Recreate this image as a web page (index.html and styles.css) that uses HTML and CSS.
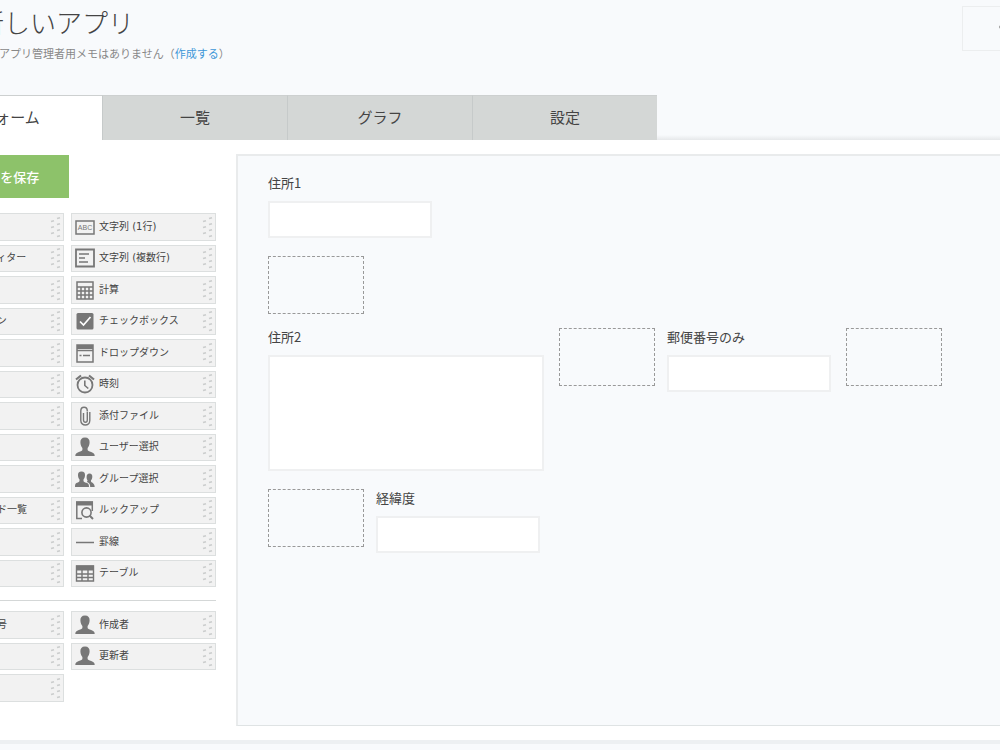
FILE: index.html
```
<!DOCTYPE html>
<html lang="ja">
<head>
  <meta charset="utf-8">
  <title>新しいアプリ</title>
  <link rel="stylesheet" href="styles.css">
</head>
<body>
  <svg class="sprite" aria-hidden="true">
    <symbol id="grip" viewBox="0 0 12 22">
      <path d="M2 5.500l3-.8M2 11.500l3-.8M2 17.500l3-.8M8 2.500l3-.8M8 8.500l3-.8M8 14.500l3-.8M8 20.500l3-.8" stroke="#cbcdcd" stroke-width="1.600" fill="none"/>
    </symbol>
    <symbol id="user" viewBox="0 0 20 20">
      <path d="M10 .5c3.300 0 4.800 2 4.600 5-.1 2.600-1 4.400-2 5.600v1.600c0 1.300 1.500 1.500 3.600 2.200 2.300.8 3.500 1.600 3.500 4.100H.3c0-2.500 1.200-3.300 3.500-4.100 2.100-.7 3.600-.9 3.600-2.200v-1.600c-1-1.200-1.900-3-2-5.600C5.200 2.500 6.700.5 10 .5z"/>
    </symbol>
  </svg>

  <header class="app-header">
    <div>
      <h1 class="app-title">新しいアプリ</h1>
      <p class="app-memo">アプリ管理者用メモはありません（<a href="#">作成する</a>）</p>
    </div>
    <button class="header-button" aria-label="設定">
      <svg viewBox="0 0 20 20" width="16" height="16"><circle cx="10" cy="10" r="6" fill="none" stroke="#aaa" stroke-width="3"/><path d="M0 10h4M16 10h4M10 0v4M10 16v4" stroke="#aaa" stroke-width="3"/></svg>
    </button>
  </header>

  <nav class="tabs">
    <a class="tab active" href="#">フォーム</a>
    <a class="tab" href="#">一覧</a>
    <a class="tab" href="#">グラフ</a>
    <a class="tab" href="#">設定</a>
  </nav>

  <main class="editor">
    <aside class="sidebar">
      <button class="save-button">フォームを保存</button>

      <ul class="palette">
        <li class="item"><span class="icon"></span>ラベル<svg class="grip"><use href="#grip"/></svg></li>
        <li class="item">
          <svg class="icon" viewBox="0 0 20 20"><path d="M1 4h18v13H1z" fill="none" stroke="#777" stroke-width="1.500"/><text class="icon-text" x="10" y="13" text-anchor="middle">ABC</text></svg>
          文字列 (1行)<svg class="grip"><use href="#grip"/></svg>
        </li>
        <li class="item"><span class="icon"></span>リッチエディター<svg class="grip"><use href="#grip"/></svg></li>
        <li class="item">
          <svg class="icon" viewBox="0 0 20 20"><path d="M1 1.500h18v17H1z" fill="none" stroke="#777" stroke-width="1.800"/><path d="M4 6h10M4 10h6M4 14h9" stroke="#777" stroke-width="1.500"/></svg>
          文字列 (複数行)<svg class="grip"><use href="#grip"/></svg>
        </li>
        <li class="item"><span class="icon"></span>数値<svg class="grip"><use href="#grip"/></svg></li>
        <li class="item">
          <svg class="icon" viewBox="0 0 20 20"><path d="M2 2h16v17H2zM2 7h16M2 11h16M2 15h16M6 7v12M10 7v12M14 7v12" fill="none" stroke="#777" stroke-width="1.500"/></svg>
          計算<svg class="grip"><use href="#grip"/></svg>
        </li>
        <li class="item"><span class="icon"></span>ラジオボタン<svg class="grip"><use href="#grip"/></svg></li>
        <li class="item">
          <svg class="icon" viewBox="0 0 20 20"><rect x="1.500" y="2" width="17" height="16.500" rx="1.500"/><path d="M5 10.500l3.500 3.500 7-8" fill="none" stroke="#fff" stroke-width="1.700"/></svg>
          チェックボックス<svg class="grip"><use href="#grip"/></svg>
        </li>
        <li class="item"><span class="icon"></span>複数選択<svg class="grip"><use href="#grip"/></svg></li>
        <li class="item">
          <svg class="icon" viewBox="0 0 20 20"><path d="M2 2h16v17H2z" fill="none" stroke="#777" stroke-width="1.500"/><path d="M2 2h16v4H2z"/><path d="M2 7.500h16M4.500 12.500h2M8 12.500h7" stroke="#777" stroke-width="1.500"/></svg>
          ドロップダウン<svg class="grip"><use href="#grip"/></svg>
        </li>
        <li class="item"><span class="icon"></span>日付<svg class="grip"><use href="#grip"/></svg></li>
        <li class="item">
          <svg class="icon" viewBox="0 0 20 20"><circle cx="10" cy="11" r="7.500" fill="none" stroke="#777" stroke-width="1.800"/><path d="M9.800 6.500v5l3.500 3" fill="none" stroke="#777" stroke-width="1.600"/><path d="M1 5.500l5-4M19 5.500l-5-4" stroke="#777" stroke-width="2.200"/></svg>
          時刻<svg class="grip"><use href="#grip"/></svg>
        </li>
        <li class="item"><span class="icon"></span>日時<svg class="grip"><use href="#grip"/></svg></li>
        <li class="item">
          <svg class="icon" viewBox="0 0 20 20"><path d="M12.300 5.500v8.500c0 3-3.800 3-3.800 0V7M14.800 6v8.500c0 6-9 6-9 0V5c0-5 6.500-5 6.500 0" fill="none" stroke="#777" stroke-width="1.400"/></svg>
          添付ファイル<svg class="grip"><use href="#grip"/></svg>
        </li>
        <li class="item"><span class="icon"></span>リンク<svg class="grip"><use href="#grip"/></svg></li>
        <li class="item"><svg class="icon"><use href="#user"/></svg>ユーザー選択<svg class="grip"><use href="#grip"/></svg></li>
        <li class="item"><span class="icon"></span>組織選択<svg class="grip"><use href="#grip"/></svg></li>
        <li class="item">
          <svg class="icon" viewBox="0 0 20 20"><path d="M6.500 2.500c2.500 0 3.700 1.500 3.500 4-.1 2-.8 3.200-1.500 4v1.500c0 1 1.300 1.200 2.800 1.800 2 .7 2.700 1.500 2.700 4.200H0c0-2.700.5-3.500 2-4.200 1.300-.6 2.500-.8 2.500-1.800v-1.500c-.7-.8-1.400-2-1.500-4-.2-2.500 1-4 3.500-4z"/><path d="M14.500 4.500c2 0 3 1.500 2.800 3.500-.1 1.500-.6 2.600-1.300 3.300v1.200c0 1 3.700 1.200 3.700 5.500h-4.500c0-3-1-4-3.200-5l.6-1.700c-.7-.8-1-1.800-1-3.300 0-2 1-3.500 2.900-3.500z"/></svg>
          グループ選択<svg class="grip"><use href="#grip"/></svg>
        </li>
        <li class="item"><span class="icon"></span>関連レコード一覧<svg class="grip"><use href="#grip"/></svg></li>
        <li class="item">
          <svg class="icon" viewBox="0 0 20 20"><path d="M1 1.500h17v4H1z"/><path d="M7 18.500H1.800V2h15.500v9" fill="none" stroke="#777" stroke-width="1.500"/><circle cx="11.500" cy="12.500" r="4.600" fill="none" stroke="#777" stroke-width="1.600"/><path d="M14.500 15.500l3.500 3.500" stroke="#777" stroke-width="2"/></svg>
          ルックアップ<svg class="grip"><use href="#grip"/></svg>
        </li>
        <li class="item"><span class="icon"></span>スペース<svg class="grip"><use href="#grip"/></svg></li>
        <li class="item">
          <svg class="icon" viewBox="0 0 20 20"><path d="M1 10.500h18" stroke="#777" stroke-width="1.500"/></svg>
          罫線<svg class="grip"><use href="#grip"/></svg>
        </li>
        <li class="item"><span class="icon"></span>グループ<svg class="grip"><use href="#grip"/></svg></li>
        <li class="item">
          <svg class="icon" viewBox="0 0 20 20"><path d="M1 2.500h18v5H1z"/><path d="M1.500 3h17v15h-17zM1 11h18M1 14.500h18M7 6v12M13 6v12" fill="none" stroke="#777" stroke-width="1.400"/></svg>
          テーブル<svg class="grip"><use href="#grip"/></svg>
        </li>
      </ul>

      <hr class="divider">

      <ul class="palette palette-system">
        <li class="item"><span class="icon"></span>レコード番号<svg class="grip"><use href="#grip"/></svg></li>
        <li class="item"><svg class="icon"><use href="#user"/></svg>作成者<svg class="grip"><use href="#grip"/></svg></li>
        <li class="item"><span class="icon"></span>作成日時<svg class="grip"><use href="#grip"/></svg></li>
        <li class="item"><svg class="icon"><use href="#user"/></svg>更新者<svg class="grip"><use href="#grip"/></svg></li>
        <li class="item"><span class="icon"></span>更新日時<svg class="grip"><use href="#grip"/></svg></li>
      </ul>
    </aside>

    <section class="canvas">
      <div class="row">
        <div class="field">
          <label for="address1">住所1</label>
          <input type="text" id="address1">
        </div>
      </div>
      <div class="row">
        <div class="space"></div>
      </div>
      <div class="row">
        <div class="field">
          <label for="address2">住所2</label>
          <textarea id="address2"></textarea>
        </div>
        <div class="space"></div>
        <div class="field">
          <label for="zipcode">郵便番号のみ</label>
          <input type="text" id="zipcode">
        </div>
        <div class="space"></div>
      </div>
      <div class="row">
        <div class="space"></div>
        <div class="field">
          <label for="latlng">経緯度</label>
          <input type="text" id="latlng">
        </div>
      </div>
    </section>
  </main>
</body>
</html>
```

FILE: styles.css
```
* {
  box-sizing: border-box;
}

body {
  margin: 0;
  overflow: hidden;
  background-color: #f8fafc;
  color: #444;
  font-family: "Noto Sans CJK JP", sans-serif;
}

.sprite {
  display: none;
}

/* header */
.app-header {
  display: flex;
  justify-content: space-between;
  align-items: flex-start;
  height: 95px;
  padding-top: 5px;
}

.app-title {
  margin: 0 0 6px -22px;
  font-size: 26px;
  font-weight: 300;
  line-height: 34px;
}

.app-memo {
  margin: 0 0 0 -1px;
  color: #888;
  font-size: 11px;
  line-height: 16px;
}

.app-memo a {
  color: #3d97d8;
  text-decoration: none;
}

.header-button {
  width: 90px;
  height: 45px;
  margin: 1px -52px 0 0;
  border: 1px solid #eceeef;
  background-color: #f8fafc;
}

/* tabs */
.tabs {
  display: flex;
  height: 45px;
  margin-left: -83px;
  background: linear-gradient(to top, #e6e8ea, #f8fafc 5px);
}

.tab {
  width: 185px;
  border-top: 1px solid #cdd0d0;
  border-left: 1px solid #c6caca;
  background-color: #d4d7d6;
  color: #444;
  font-size: 15px;
  line-height: 42px;
  text-align: center;
  text-decoration: none;
}

.tab.active {
  background-color: #fff;
}

/* form editor */
.editor {
  display: flex;
  gap: 20px;
  padding: 14px 0;
  margin-left: -81px;
  border-bottom: 4px solid #edf0f2;
  background-color: #fff;
}

.sidebar {
  flex: none;
  width: 297px;
  padding-top: 1px;
}

.save-button {
  display: block;
  width: 150px;
  height: 43px;
  margin-bottom: 15px;
  border: none;
  background-color: #8dc26a;
  color: #fff;
  font-family: inherit;
  font-size: 13px;
  font-weight: 500;
}

.palette {
  display: grid;
  grid-template-columns: 1fr 1fr;
  grid-auto-rows: 1fr;
  gap: 4px 7px;
  min-height: 374px;
  padding: 0;
  margin: 0;
  list-style: none;
}

.palette-system {
  min-height: 91px;
}

.item {
  display: flex;
  align-items: center;
  gap: 4px;
  padding: 0 2px 0 3px;
  border: 1px solid #dcdfdf;
  background-color: #f2f2f2;
  font-family: "DejaVu Sans", "Noto Sans CJK JP", sans-serif;
  font-size: 10px;
  line-height: 14px;
  white-space: nowrap;
}

.icon {
  width: 20px;
  height: 20px;
  fill: #777;
}

.icon-text {
  font-family: "Liberation Sans", sans-serif;
  font-size: 7px;
}

.grip {
  width: 12px;
  height: 22px;
  margin-left: auto;
}

.divider {
  height: 1px;
  margin: 13px 0 10px;
  border: none;
  background-color: #d4d7d7;
}

.canvas {
  flex: 1;
  min-height: 572px;
  padding: 18px 0 0 30px;
  border: 1px solid #dfe3e4;
  border-width: 2px 0 1px 2px;
  border-top-color: #e9ebec;
  border-left-color: #e9ebec;
  background-color: #f8fafc;
}

.row {
  display: flex;
  align-items: flex-start;
}

.field {
  margin: 0 15px 18px 0;
}

.field label {
  display: block;
  margin-bottom: 9px;
  font-size: 13px;
  line-height: 18px;
}

.field input,
.field textarea {
  display: block;
  width: 164px;
  height: 37px;
  border: 2px solid #eff0f1;
  background-color: #fff;
}

.field textarea {
  width: 276px;
  height: 116px;
  resize: none;
}

.space {
  width: 96px;
  height: 58px;
  margin: 0 12px 14px 0;
  border: 1px dashed #999;
}
```
